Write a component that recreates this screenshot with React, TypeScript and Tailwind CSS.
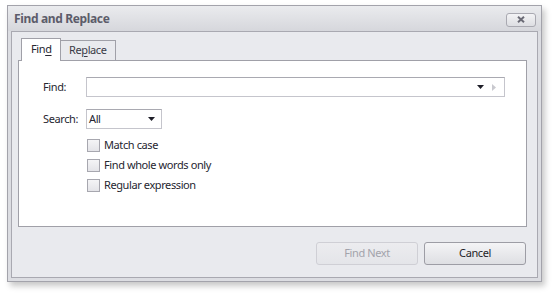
const font = { fontFamily: '"Noto Sans", "Open Sans", sans-serif' };

function DownArrow({ className = '' }: { className?: string }) {
  return (
    <svg width="7" height="4" viewBox="0 0 7 4" className={className}>
      <path d="M0 0h7L3.5 4z" fill="#1e1e28" />
    </svg>
  );
}

function CheckRow({ label }: { label: string }) {
  return (
    <div className="flex h-[20px] items-center">
      <div className="h-[13px] w-[13px] border border-[#a7a7af] bg-gradient-to-b from-[#f4f4f6] to-[#e4e4e8]" />
      <span className="ml-[4px] text-[11px] tracking-[-0.4px] text-[#262630]">{label}</span>
    </div>
  );
}

export default function App() {
  return (
    <div className="h-[297px] w-[554px] bg-white pl-[7px] pt-[5px]" style={font}>
      <div className="flex h-[277px] w-[535px] flex-col border border-[#a3a3ab] bg-[#dcdde2] shadow-[3px_4px_6px_rgba(0,0,0,0.22)]">
        {/* title bar */}
        <div className="flex h-[25px] shrink-0 items-center justify-between bg-gradient-to-b from-[#eaebee] to-[#d6d7dc] pl-[6px] pr-[5px]">
          <span className="text-[12px] font-bold tracking-[-0.35px] text-[#5c5c6a]">Find and Replace</span>
          <div className="mt-[2px] flex h-[14px] w-[30px] items-center justify-center rounded-[3px] border border-[#a9a9b1] bg-gradient-to-b from-[#f3f3f5] to-[#dddee2]">
            <svg width="8" height="7" viewBox="0 0 8 7">
              <path d="M1 0.8L7 6.2M7 0.8L1 6.2" stroke="#6b6b76" strokeWidth="2" />
            </svg>
          </div>
        </div>
        {/* body */}
        <div className="mx-[3px] mb-[3px] flex flex-1 flex-col border border-[#a9a9b1] bg-[#e9eaee] pl-[6px] pr-[10px] pt-[6px]">
          {/* tabs */}
          <div className="flex h-[22px] items-end pl-[3px]">
            <div className="relative z-10 -mb-px flex h-[23px] w-[40px] items-start border border-b-0 border-[#a0a0a8] bg-white pl-[9px] pt-[2px] text-[11px] tracking-[-0.4px] text-[#262630]">
              <span>
                Fin<span className="underline underline-offset-2">d</span>
              </span>
            </div>
            <div className="-ml-px flex h-[20px] w-[56px] items-start border border-b-0 border-[#a0a0a8] bg-[#e9eaee] pl-[8px] pt-[1px] text-[11px] tracking-[-0.4px] text-[#3a3a46]">
              <span>
                Re<span className="underline underline-offset-2">p</span>lace
              </span>
            </div>
          </div>
          {/* page */}
          <div className="flex h-[167px] flex-col border border-[#a0a0a8] bg-white pl-[24px] pt-[16px]">
            <div className="flex items-center">
              <span className="w-[43px] text-[11px] tracking-[-0.4px] text-[#262630]">Find:</span>
              <div className="flex h-[20px] w-[419px] items-center justify-end border border-[#c5c5cc] border-t-[#a9a9b1] bg-white pr-[8px]">
                <DownArrow />
                <svg width="4" height="7" viewBox="0 0 4 7" className="ml-[8px]">
                  <path d="M0 0L4 3.5L0 7z" fill="#c9c9cf" />
                </svg>
              </div>
            </div>
            <div className="mt-[12px] flex items-center">
              <span className="w-[43px] text-[11px] tracking-[-0.4px] text-[#262630]">Search:</span>
              <div className="flex h-[20px] w-[76px] items-center justify-between border border-[#c5c5cc] border-t-[#a9a9b1] bg-white pl-[2px] pr-[6px]">
                <span className="text-[11px] tracking-[-0.4px] text-[#262630]">All</span>
                <DownArrow />
              </div>
            </div>
            <div className="ml-[44px] mt-[6px] flex flex-col">
              <CheckRow label="Match case" />
              <CheckRow label="Find whole words only" />
              <CheckRow label="Regular expression" />
            </div>
          </div>
          {/* buttons */}
          <div className="mt-[15px] flex justify-end gap-[6px] pr-px">
            <div className="flex h-[23px] w-[102px] items-center justify-center rounded-[3px] border border-[#cfcfd5] bg-gradient-to-b from-[#ececef] to-[#e4e5e9] text-[11px] tracking-[-0.4px] text-[#a3a3ab]">
              Find Next
            </div>
            <div className="flex h-[23px] w-[102px] items-center justify-center rounded-[3px] border border-[#9d9da5] bg-gradient-to-b from-[#f4f4f6] to-[#dedfe3] text-[11px] tracking-[-0.4px] text-[#1e1e28]">
              Cancel
            </div>
          </div>
        </div>
      </div>
    </div>
  );
}
